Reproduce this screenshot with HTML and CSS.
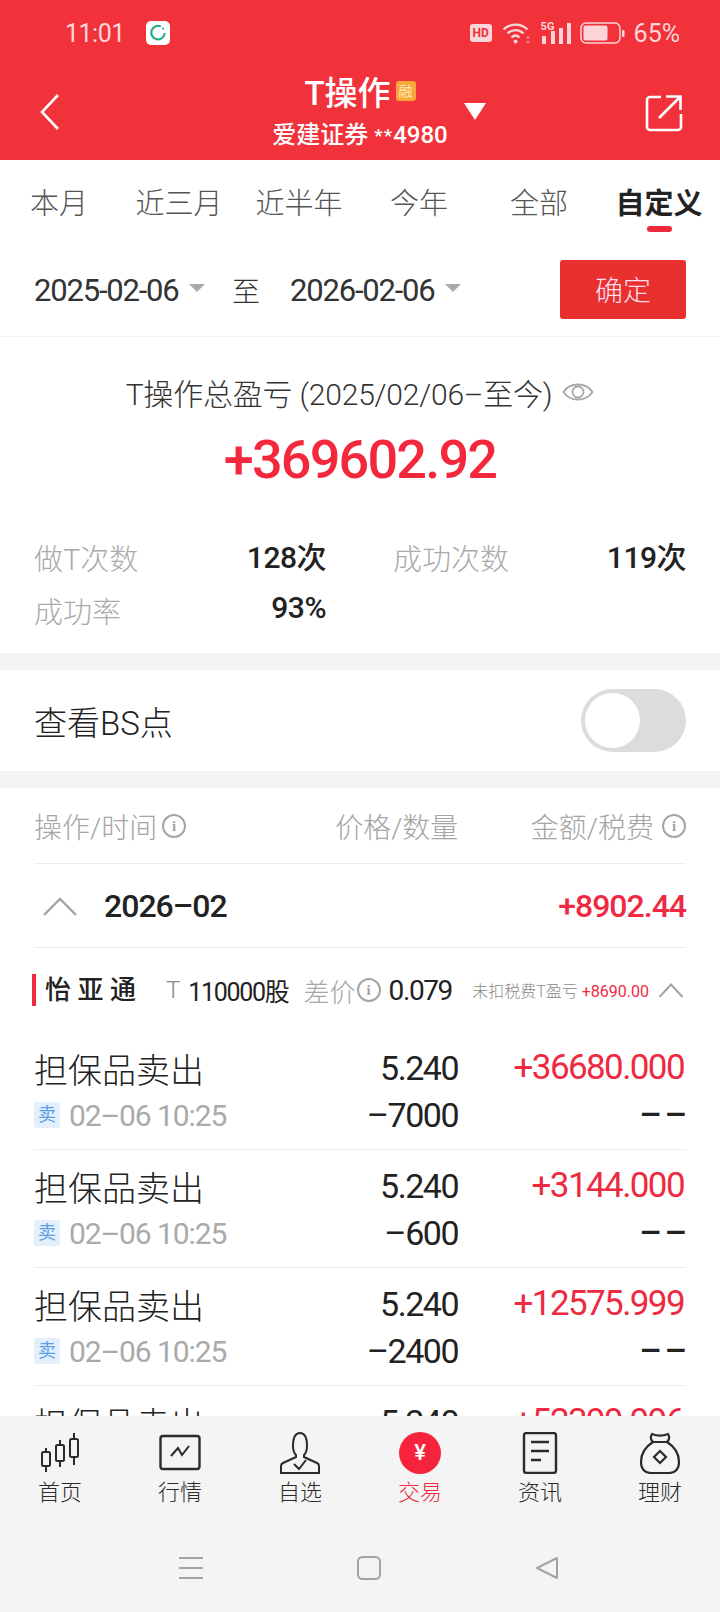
FILE: index.html
```html
<!DOCTYPE html>
<html lang="zh-CN">
<head>
  <meta charset="UTF-8" />
  <meta name="viewport" content="width=device-width, initial-scale=1" />
  <title>T操作</title>
  <link rel="stylesheet" href="styles.css">
</head>
<body>
  <div class="page">
    <header class="topbar">
      <div class="status">
        <span class="status-time">11:01</span>
        <span class="status-app">
          <svg width="18" height="18" viewBox="0 0 16 16"><path d="M10.500 2.200A6 6 0 1 0 14 8" fill="none" stroke="#22a98c" stroke-width="1.800"/><circle cx="12.600" cy="4" r="1" fill="#22a98c"/></svg>
        </span>
        <span class="status-right">
          <span class="status-hd">HD</span>
          <svg width="29" height="24" viewBox="0 0 29 24"><g fill="none" stroke="#fbd5d8" stroke-width="2.400"><path d="M1.500 8.500C8 2 19 2 25.500 8.500"/><path d="M5.500 12.500C10 8 17 8 21.500 12.500"/><path d="M9.500 16.500C12 14 15 14 17.500 16.500"/></g><circle cx="13.500" cy="20.500" r="2" fill="#fbd5d8"/><path d="M26 14.500l2 3h-4zM26 23l2-3h-4z" fill="#f58a90"/></svg>
          <span class="status-signal">
            <span class="status-5g">5G</span>
            <svg width="31" height="21" viewBox="0 0 31 21"><path d="M1 13h4v8H1zM10 8h4v13h-4zM18 5h4v16h-4zM26 0h4v21h-4z" fill="#fbd5d8"/></svg>
          </span>
          <svg width="46" height="22" viewBox="0 0 46 22"><rect x="1" y="1" width="39" height="20" rx="5" fill="none" stroke="#fbd5d8" stroke-width="1.500"/><rect x="3.500" y="3.500" width="24" height="15" rx="2" fill="#fbd5d8"/><rect x="42" y="8" width="2.500" height="7" rx="1" fill="#fbd5d8"/></svg>
          <span class="status-pct">65%</span>
        </span>
      </div>
      <div class="navbar">
        <svg class="navbar-back" width="24" height="38" viewBox="0 0 24 38"><path d="M20 2L4 19l16 17" fill="none" stroke="#fff" stroke-width="2.600"/></svg>
        <div class="navbar-title">
          <div class="navbar-main">T操作<span class="rong">融</span></div>
          <div class="navbar-sub">爱建证券 <span class="stars">**</span>4980</div>
        </div>
        <span class="navbar-caret"></span>
        <svg class="navbar-share" width="38" height="38" viewBox="0 0 38 38"><g fill="none" stroke="#fff" stroke-width="2.600"><path d="M16 3H5a3 3 0 0 0-3 3v27a3 3 0 0 0 3 3h28a3 3 0 0 0 3-3V20"/><path d="M14 24L35 3M21 2.500h14.500V16"/></g></svg>
      </div>
    </header>

    <main class="content">
      <nav class="tabs">
        <span class="tab">本月</span>
        <span class="tab">近三月</span>
        <span class="tab">近半年</span>
        <span class="tab">今年</span>
        <span class="tab">全部</span>
        <span class="tab active">自定义</span>
      </nav>

      <div class="dates">
        <span class="date">2025-02-06<i class="date-caret"></i></span>
        <span class="date-to">至</span>
        <span class="date">2026-02-06<i class="date-caret"></i></span>
        <button class="confirm">确定</button>
      </div>

      <section class="summary">
        <div class="summary-title">T操作总盈亏 (2025/02/06–至今)
          <svg width="32" height="24" viewBox="0 0 32 24"><g fill="none" stroke="#a9a9a9" stroke-width="1.800"><path d="M1.500 12C8 2 24 2 30.500 12 24 22 8 22 1.500 12z"/><circle cx="16" cy="12" r="5.500"/></g></svg>
        </div>
        <div class="summary-value">+369602.92</div>
        <div class="stats">
          <div class="stat"><span class="stat-label">做T次数</span><span class="stat-value">128次</span></div>
          <div class="stat"><span class="stat-label">成功次数</span><span class="stat-value">119次</span></div>
          <div class="stat"><span class="stat-label">成功率</span><span class="stat-value">93%</span></div>
        </div>
      </section>

      <section class="bs-row">
        <span>查看BS点</span>
        <span class="switch"><span class="switch-knob"></span></span>
      </section>

      <section class="records">
        <div class="records-head">
          <span class="head-cell">操作/时间<span class="info">i</span></span>
          <span class="head-cell head-price">价格/数量</span>
          <span class="head-cell head-amount">金额/税费<span class="info">i</span></span>
        </div>

        <div class="month">
          <svg width="36" height="20" viewBox="0 0 36 20"><path d="M2 19L18 3l16 16" fill="none" stroke="#a3a3a3" stroke-width="2.400"/></svg>
          <span class="month-name">2026–02</span>
          <span class="month-value">+8902.44</span>
        </div>

        <div class="stock">
          <span class="stock-name">怡 亚 通</span>
          <span class="stock-t">T</span>
          <span class="stock-qty">110000股</span>
          <span class="stock-diff">差价<span class="info">i</span></span>
          <span class="stock-price">0.079</span>
          <span class="stock-note">未扣税费T盈亏 <b>+8690.00</b></span>
          <svg width="26" height="16" viewBox="0 0 26 16"><path d="M1.500 15L13 2.500 24.500 15" fill="none" stroke="#a3a3a3" stroke-width="2"/></svg>
        </div>

        <div class="trade">
          <span class="trade-name">担保品卖出</span>
          <span class="trade-price">5.240</span>
          <span class="trade-amount">+36680.000</span>
          <span class="trade-time"><i class="sell-tag">卖</i>02–06 10:25</span>
          <span class="trade-qty">–7000</span>
          <span class="trade-fee">– –</span>
        </div>
        <div class="trade">
          <span class="trade-name">担保品卖出</span>
          <span class="trade-price">5.240</span>
          <span class="trade-amount">+3144.000</span>
          <span class="trade-time"><i class="sell-tag">卖</i>02–06 10:25</span>
          <span class="trade-qty">–600</span>
          <span class="trade-fee">– –</span>
        </div>
        <div class="trade">
          <span class="trade-name">担保品卖出</span>
          <span class="trade-price">5.240</span>
          <span class="trade-amount">+12575.999</span>
          <span class="trade-time"><i class="sell-tag">卖</i>02–06 10:25</span>
          <span class="trade-qty">–2400</span>
          <span class="trade-fee">– –</span>
        </div>
        <div class="trade">
          <span class="trade-name">担保品卖出</span>
          <span class="trade-price">5.240</span>
          <span class="trade-amount">+52399.996</span>
        </div>
      </section>
    </main>

    <footer class="bottom">
      <nav class="bottom-tabs">
        <span class="bottom-tab">
          <svg width="42" height="42" viewBox="0 0 42 42"><g fill="none" stroke="#2b2b2b" stroke-width="2"><rect x="3" y="20" width="8" height="14" rx="1.500"/><path d="M7 16v4M7 34v6"/><rect x="17" y="13" width="8" height="16" rx="1.500"/><path d="M21 8v5M21 29v6"/><rect x="31" y="7" width="8" height="18" rx="1.500"/><path d="M35 1v6M35 25v8"/></g></svg>
          首页
        </span>
        <span class="bottom-tab">
          <svg width="42" height="42" viewBox="0 0 42 42"><rect x="1.500" y="4" width="39" height="33" rx="2.500" fill="none" stroke="#2b2b2b" stroke-width="2.400"/><path d="M12 24l7-8 4 7 7-9" fill="none" stroke="#2b2b2b" stroke-width="2"/></svg>
          行情
        </span>
        <span class="bottom-tab">
          <svg width="42" height="42" viewBox="0 0 42 42"><path d="M14 14C14 6 16 1 21 1s7 5 7 13c0 5-2 8-3 9v2l13 6c1 .500 2 1 2 3v7H2v-7c0-2 1-2.500 2-3l13-6v-2c-1-1-3-4-3-9z" fill="none" stroke="#2b2b2b" stroke-width="2"/><path d="M15 32l5 5 7-9" fill="none" stroke="#2b2b2b" stroke-width="2"/></svg>
          自选
        </span>
        <span class="bottom-tab trade-tab">
          <span class="yen">¥</span>
          交易
        </span>
        <span class="bottom-tab">
          <svg width="42" height="42" viewBox="0 0 42 42"><rect x="5" y="1" width="32" height="40" rx="2.500" fill="none" stroke="#2b2b2b" stroke-width="2.400"/><path d="M12 10h18M12 19h18M12 28h10" stroke="#2b2b2b" stroke-width="2.400"/></svg>
          资讯
        </span>
        <span class="bottom-tab">
          <svg width="42" height="42" viewBox="0 0 42 42"><g fill="none" stroke="#2b2b2b" stroke-width="2.200"><path d="M14 10C6 15 2 22 2 30c0 7 4 11 10 11h18c6 0 10-4 10-11 0-8-4-15-12-20"/><path d="M13 2c5 2 11 2 16 0 2 3 1 6-1 8H14c-2-2-3-5-1-8z"/><path d="M21 19l6 6-6 6-6-6z"/></g></svg>
          理财
        </span>
      </nav>
      <div class="sysbar">
        <svg width="24" height="24" viewBox="0 0 24 24"><path d="M0 2h24M0 12h24M0 22h24" stroke="#a3a3a3" stroke-width="2"/></svg>
        <svg width="24" height="24" viewBox="0 0 24 24"><rect x="1" y="1" width="22" height="22" rx="4.500" fill="none" stroke="#a3a3a3" stroke-width="2"/></svg>
        <svg width="24" height="24" viewBox="0 0 24 24"><path d="M22 2v20L2 12z" fill="none" stroke="#a3a3a3" stroke-width="2" stroke-linejoin="round"/></svg>
      </div>
    </footer>
  </div>
</body>
</html>
```

FILE: styles.css
```css
* {
  box-sizing: border-box;
}
body {
  margin: 0;
  font-family: Roboto, 'Noto Sans CJK SC', sans-serif;
  color: #222;
  background: #fff;
}
i {
  font-style: normal;
}
.page {
  width: 720px;
  height: 1612px;
  display: flex;
  flex-direction: column;
  overflow: hidden;
}

/* red header */
.topbar {
  height: 160px;
  flex: none;
  background: #f1323b;
  color: #fff;
}
.status {
  height: 66px;
  display: flex;
  align-items: center;
  padding: 0 40px 0 65px;
  color: #fbd5d8;
}
.status-time {
  font-size: 25px;
  letter-spacing: -0.5px;
  width: 81px;
}
.status-app {
  width: 24px;
  height: 24px;
  background: #fff;
  border-radius: 5px;
  display: flex;
  align-items: center;
  justify-content: center;
}
.status-right {
  margin-left: auto;
  display: flex;
  align-items: center;
  gap: 8px;
}
.status-hd {
  width: 22px;
  height: 18px;
  background: #fbd5d8;
  border-radius: 3px;
  color: #e8323a;
  font-size: 12px;
  font-weight: 700;
  line-height: 18px;
  text-align: center;
  margin-right: 2px;
}
.status-signal {
  position: relative;
  width: 31px;
  height: 21px;
  display: block;
  margin-left: 2px;
}
.status-signal svg {
  display: block;
}
.status-5g {
  position: absolute;
  left: 0;
  top: -2px;
  font-size: 11px;
  font-weight: 700;
  line-height: 11px;
}
.status-pct {
  font-size: 25px;
}
.navbar {
  height: 94px;
  position: relative;
  display: flex;
  justify-content: center;
}
.navbar-back {
  position: absolute;
  left: 38px;
  top: 27px;
}
.navbar-share {
  position: absolute;
  left: 645px;
  top: 28px;
}
.navbar-caret {
  position: absolute;
  left: 464px;
  top: 37px;
  border-left: 11px solid transparent;
  border-right: 11px solid transparent;
  border-top: 17px solid #fff;
}
.navbar-title {
  text-align: center;
}
.navbar-main {
  height: 50px;
  font-size: 33px;
  font-weight: 500;
  line-height: 56px;
}
.rong {
  display: inline-block;
  width: 20px;
  height: 20px;
  margin-left: 5px;
  background: #f9a63a;
  border-radius: 3px;
  color: #fde6b8;
  font-size: 14px;
  font-weight: 400;
  line-height: 20px;
  vertical-align: 9px;
}
.navbar-sub {
  font-size: 24px;
  font-weight: 500;
  line-height: 38px;
}
.stars {
  font-size: 19px;
  letter-spacing: 1px;
  vertical-align: 1px;
}

/* period tabs */
.content {
  flex: 1;
  min-height: 0;
  overflow: hidden;
}
.tabs {
  display: grid;
  grid-template-columns: repeat(6, 120px);
  height: 80px;
  margin-left: -1px;
}
.tab {
  position: relative;
  text-align: center;
  font-size: 29px;
  font-weight: 300;
  line-height: 88px;
  color: #555;
}
.tab.active {
  color: #222;
  font-weight: 700;
}
.tab.active::after {
  content: '';
  position: absolute;
  left: 48px;
  top: 66px;
  width: 25px;
  height: 6px;
  border-radius: 3px;
  background: #f1293f;
}
.dates {
  height: 97px;
  display: flex;
  align-items: center;
  padding: 4px 34px 0;
  border-bottom: 1px solid #f2f2f2;
  font-size: 31px;
  letter-spacing: -1.200px;
  color: #333;
}
.date {
  width: 170px;
  white-space: nowrap;
}
.date-caret {
  display: inline-block;
  margin-left: 10px;
  border-left: 8px solid transparent;
  border-right: 8px solid transparent;
  border-top: 8px solid #aaa;
  vertical-align: 9px;
}
.date-to {
  font-size: 28px;
  font-weight: 300;
  letter-spacing: 0;
  margin: 0 30px 0 28px;
}
.confirm {
  margin-left: auto;
  width: 126px;
  height: 59px;
  margin-top: -2px;
  border: none;
  border-radius: 3px;
  background: #e8302f;
  color: #fde;
  font-family: inherit;
  font-size: 28px;
  font-weight: 300;
}

/* summary block */
.summary {
  height: 305px;
  padding: 0 34px;
  border-bottom: 17px solid #f4f4f4;
}
.summary-title {
  display: flex;
  justify-content: center;
  align-items: center;
  gap: 10px;
  height: 54px;
  margin-top: 28px;
  font-size: 30px;
  font-weight: 300;
  letter-spacing: -0.2px;
  color: #333;
}
.summary-value {
  height: 80px;
  text-align: center;
  font-size: 54px;
  font-weight: 500;
  letter-spacing: -1.800px;
  line-height: 82px;
  color: #f4283d;
}
.stats {
  display: grid;
  grid-template-columns: 292px 293px;
  column-gap: 67px;
  margin-top: 31px;
}
.stat {
  height: 53px;
  display: flex;
  justify-content: space-between;
  align-items: center;
}
.stat-label {
  font-size: 29px;
  font-weight: 300;
  color: #aaa;
}
.stat-value {
  margin-bottom: 4px;
  font-size: 30px;
  font-weight: 500;
  letter-spacing: -0.5px;
  color: #222;
}
.bs-row {
  height: 118px;
  padding: 0 34px;
  display: flex;
  justify-content: space-between;
  align-items: center;
  border-bottom: 17px solid #f4f4f4;
  font-size: 33px;
  font-weight: 300;
}
.switch {
  width: 105px;
  height: 63px;
  padding: 4px;
  border-radius: 32px;
  background: #dcdcdc;
}
.switch-knob {
  display: block;
  width: 55px;
  height: 55px;
  border-radius: 50%;
  background: #fff;
}

/* records table */
.records {
  padding: 0 34px;
}
.records-head {
  height: 76px;
  display: flex;
  align-items: center;
  border-bottom: 1px solid #ececec;
  font-size: 28px;
  font-weight: 300;
  color: #a5a5a5;
}
.head-cell {
  display: flex;
  align-items: center;
}
.head-price {
  margin-left: 149px;
}
.head-amount {
  margin-left: auto;
}
.info {
  width: 24px;
  height: 24px;
  margin-left: 5px;
  border: 2px solid #a5a5a5;
  border-radius: 50%;
  font-size: 15px;
  font-weight: 700;
  line-height: 20px;
  text-align: center;
  color: #a5a5a5;
  font-family: 'Liberation Serif', serif;
  flex: none;
}
.head-amount .info {
  margin-left: 8px;
}
.month {
  height: 84px;
  display: flex;
  align-items: center;
  padding-left: 8px;
  border-bottom: 1px solid #ececec;
  font-size: 32px;
  font-weight: 500;
  letter-spacing: -1px;
}
.month-name {
  margin-left: 26px;
}
.month-value {
  margin-left: auto;
  color: #ee2a42;
}
.stock {
  height: 84px;
  display: flex;
  align-items: center;
  margin-left: -2px;
  padding-right: 2px;
  white-space: nowrap;
}
.stock-name {
  height: 32px;
  width: 120px;
  padding-left: 9px;
  border-left: 4px solid #f1293f;
  font-size: 26px;
  font-weight: 500;
  line-height: 32px;
  flex: none;
}
.stock-t {
  margin-left: 14px;
  font-size: 24px;
  font-weight: 300;
  color: #888;
}
.stock-qty {
  margin-left: 8px;
  font-size: 25px;
  letter-spacing: -1.300px;
}
.stock-diff {
  display: flex;
  align-items: center;
  margin-left: 15px;
  font-size: 26px;
  font-weight: 300;
  color: #a5a5a5;
}
.stock-diff .info {
  margin-left: 1px;
}
.stock-price {
  margin-left: 8px;
  font-size: 28px;
  letter-spacing: -1.400px;
}
.stock-note {
  margin-left: auto;
  margin-right: 9px;
  font-size: 16px;
  font-weight: 300;
  color: #888;
}
.stock-note b {
  font-weight: 400;
  color: #ee2a42;
}
.trade {
  display: grid;
  grid-template-columns: 1fr 130px 226px;
  grid-template-rows: 46px 46px;
  height: 118px;
  padding: 14px 2px 0 0;
  align-items: center;
  border-bottom: 1px solid #ececec;
}
.trade-name {
  font-size: 34px;
  font-weight: 300;
  line-height: 46px;
  position: relative;
  top: 2px;
}
.trade-price,
.trade-qty {
  text-align: right;
  font-size: 34px;
  letter-spacing: -1.500px;
}
.trade-amount,
.trade-fee {
  text-align: right;
  font-size: 35px;
  letter-spacing: -1.600px;
  color: #ee2a42;
}
.trade-price,
.trade-amount {
  margin-bottom: 3px;
}
.trade-fee {
  color: #222;
  font-weight: 500;
  letter-spacing: -3px;
}
.trade-time {
  display: flex;
  align-items: center;
  font-size: 30px;
  letter-spacing: -1.100px;
  color: #aaa;
}
.sell-tag {
  width: 26px;
  height: 26px;
  margin-right: 9px;
  background: #e3f0fc;
  border-radius: 2px;
  color: #5a9fe6;
  font-size: 18px;
  letter-spacing: 0;
  line-height: 26px;
  text-align: center;
}

/* bottom navigation */
.bottom {
  height: 196px;
  flex: none;
  background: #f4f4f4;
}
.bottom-tabs {
  display: grid;
  grid-template-columns: repeat(6, 120px);
  height: 108px;
  padding-top: 16px;
}
.bottom-tab {
  display: flex;
  flex-direction: column;
  align-items: center;
  font-size: 22px;
  font-weight: 300;
  line-height: 38px;
  color: #2b2b2b;
}
.bottom-tab svg {
  display: block;
}
.trade-tab {
  color: #ee2a42;
}
.yen {
  width: 42px;
  height: 42px;
  border-radius: 50%;
  background: #f5233c;
  color: #fff;
  font-size: 22px;
  font-weight: 500;
  line-height: 42px;
  text-align: center;
}
.sysbar {
  display: flex;
  justify-content: center;
  align-items: center;
  gap: 154px;
  height: 88px;
  padding-left: 18px;
}
```
